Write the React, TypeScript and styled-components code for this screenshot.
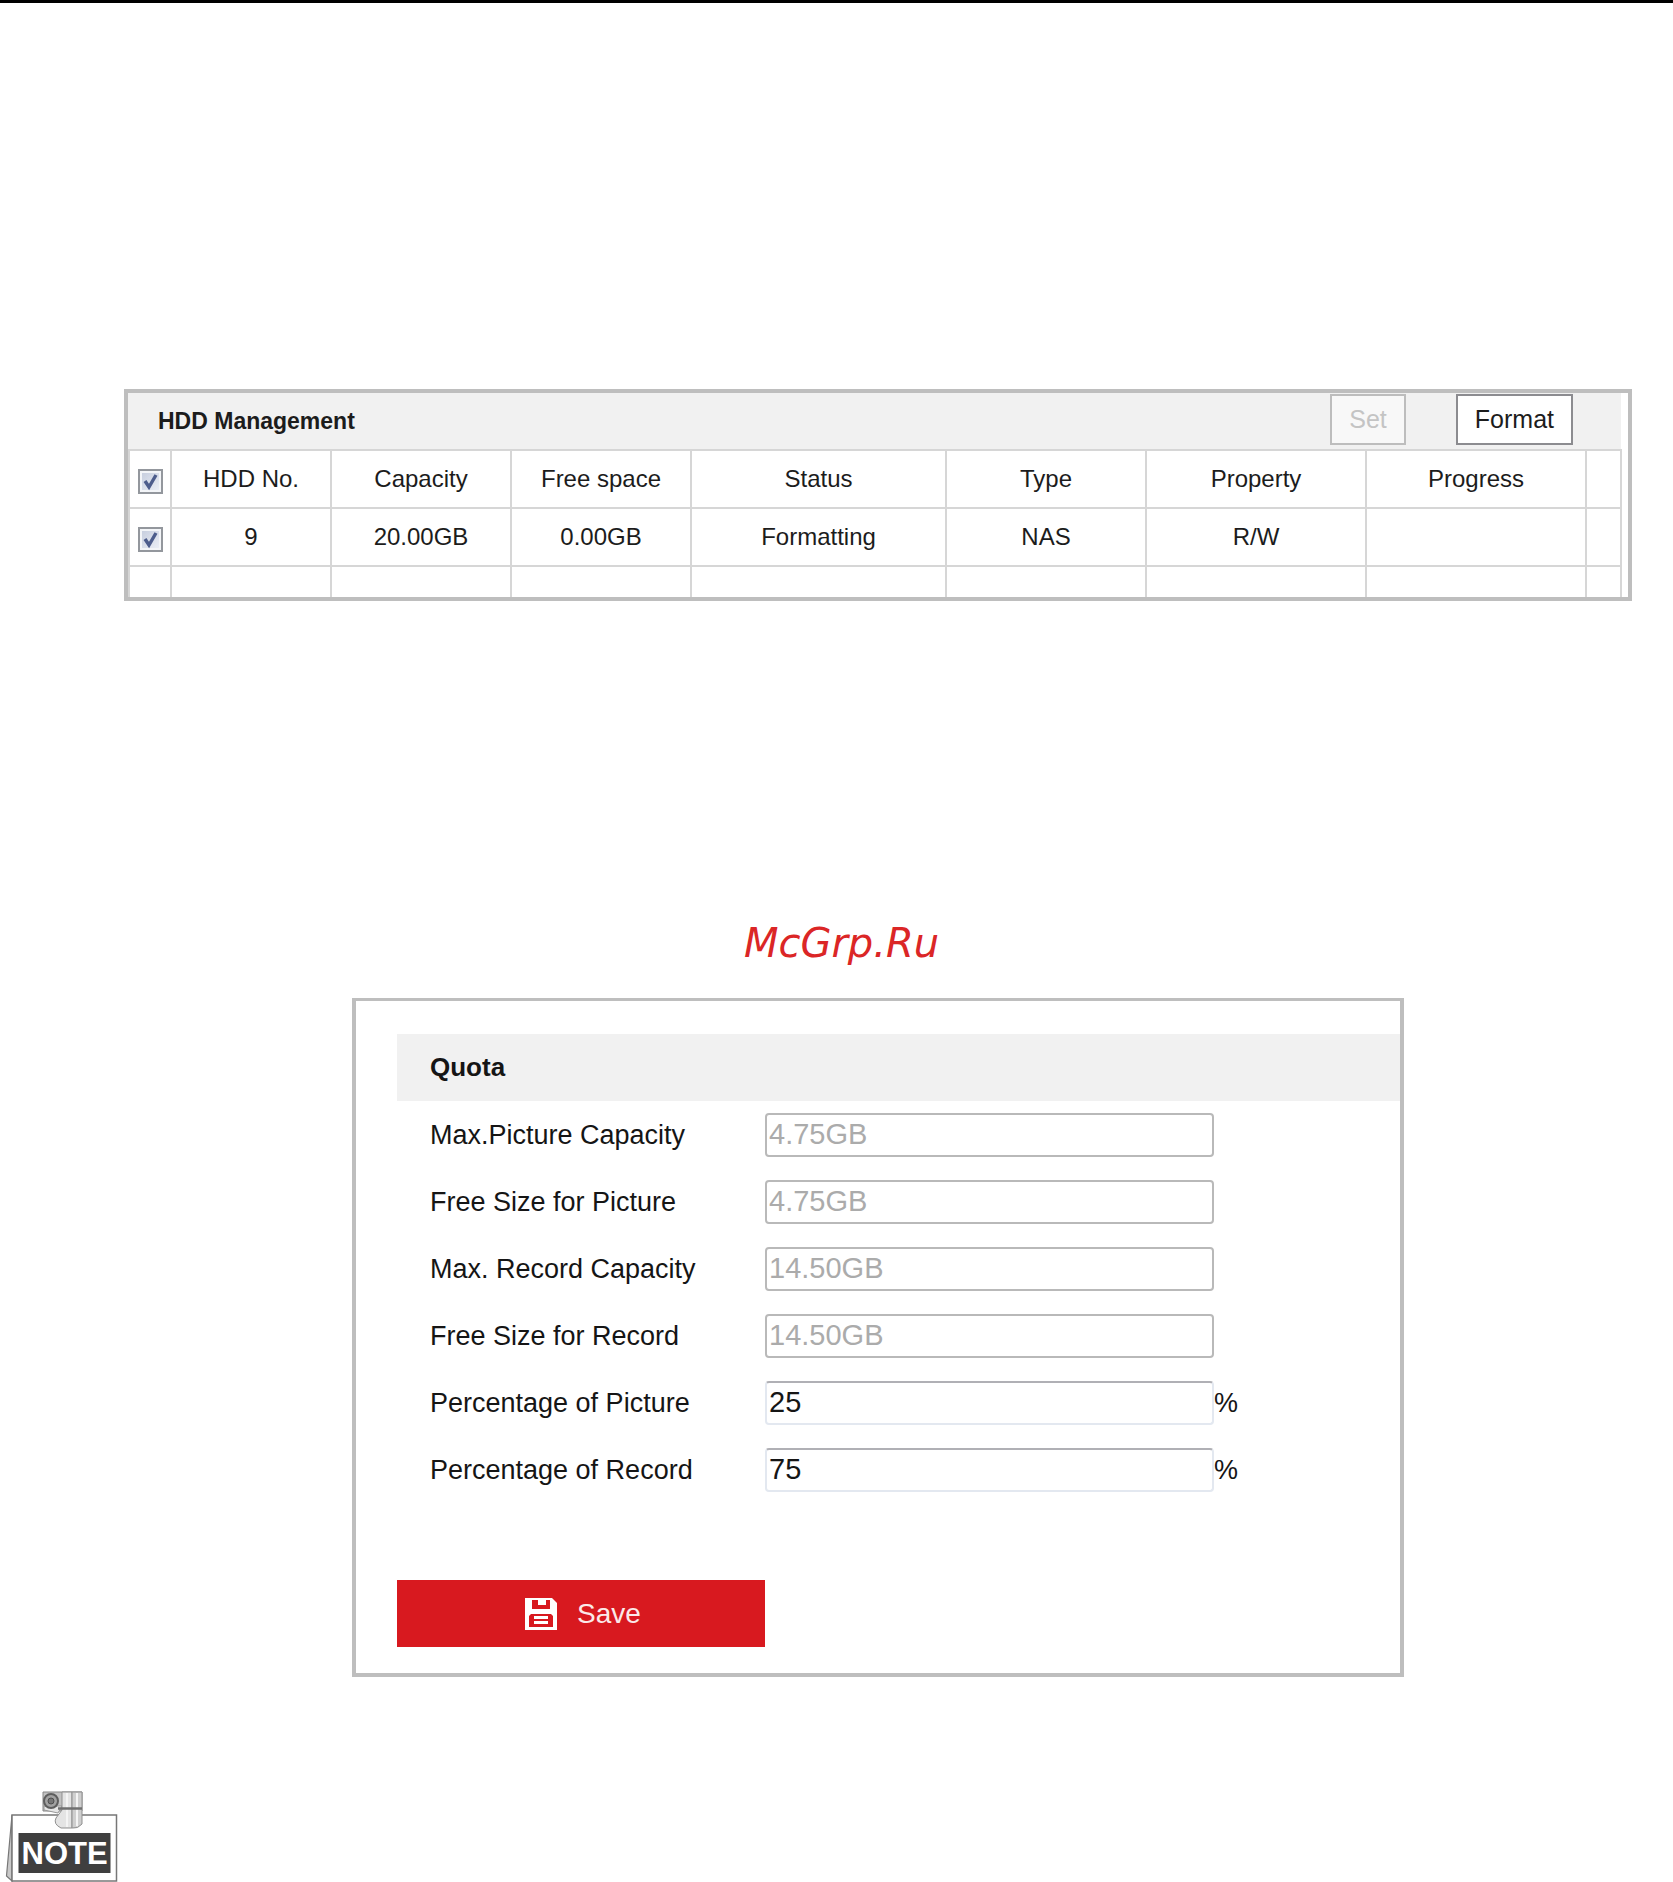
import React, { useState } from "react";
import styled, { createGlobalStyle, css } from "styled-components";

const GlobalStyle = createGlobalStyle`
  *, *::before, *::after { box-sizing: border-box; }
  body {
    margin: 0;
    background: #fff;
    color: #1c1c1c;
    font-family: "Liberation Sans", Arial, sans-serif;
  }
  button, input { font-family: inherit; }
`;

const Page = styled.div`
  border-top: 3px solid #000;
`;

const Section = styled.section<{ $top: number }>`
  padding: ${(p) => p.$top}px 41px 0 124px;
`;

const HddPanel = styled.div`
  border: 4px solid #bebebe;
  padding: 0 7px 0 0;
`;

const HddHeader = styled.header`
  display: flex;
  align-items: flex-start;
  gap: 50px;
  height: 56px;
  padding: 1px 48px 0 30px;
  background: #f1f1f1;
`;

const HddTitle = styled.h2`
  flex: 1;
  margin: 0;
  font-size: 23px;
  line-height: 55px;
  font-weight: 700;
`;

const ToolButton = styled.button`
  height: 51px;
  padding: 0 17px;
  border: 2px solid #8c8c90;
  background: #fff;
  color: #1c1c1c;
  font-size: 25px;
  line-height: 47px;

  &:disabled {
    border-color: #bdbdbd;
    background: #f8f8f8;
    color: #c4c4c4;
  }
`;

const HddTable = styled.table`
  width: 100%;
  table-layout: fixed;
  border-spacing: 0;
  border-right: 2px solid #d6d6d6;
  font-size: 24px;
  line-height: 28px;
`;

const cell = css`
  height: 58px;
  padding: 0;
  border-top: 2px solid #d6d6d6;
  border-left: 2px solid #d6d6d6;
  text-align: center;
  font-weight: 400;
`;

const HeadCell = styled.th`
  ${cell}
`;

const Cell = styled.td<{ $short?: boolean }>`
  ${cell}
  ${(p) => p.$short && "height: 32px;"}
`;

const CheckBox = styled.label`
  display: inline-grid;
  vertical-align: middle;
  padding-top: 4px;

  input, svg { grid-area: 1 / 1; }
  svg { pointer-events: none; }
  input:not(:checked) + svg { visibility: hidden; }
`;

const CheckInput = styled.input`
  appearance: none;
  width: 25px;
  height: 25px;
  margin: 0;
  border: 2px solid #93979d;
  background: linear-gradient(135deg, #c3cbdc, #eef1f8);
  box-shadow: inset 0 0 0 2px #f3f5f8;
`;

const Watermark = styled.p`
  margin: 0;
  padding: 318px 0 0 10px;
  color: #db2626;
  font-family: "DejaVu Sans", Verdana, sans-serif;
  font-size: 40px;
  line-height: 48px;
  font-style: italic;
  text-align: center;
`;

const QuotaPanel = styled.form`
  max-width: 1052px;
  margin: 0 auto;
  padding: 33px 0 26px 41px;
  border: 4px solid #bebebe;
  border-top-width: 3px;
  color: #151515;
`;

const QuotaTitle = styled.h2`
  margin: 0;
  padding-left: 33px;
  background: #f1f1f1;
  font-size: 26px;
  line-height: 67px;
`;

const Field = styled.div`
  display: grid;
  grid-template-columns: 335px 449px auto;
  align-items: center;
  height: 67px;
  padding-left: 33px;
  font-size: 27px;
  line-height: 32px;
`;

const TextBox = styled.input`
  width: 100%;
  height: 44px;
  padding: 0 2px;
  border: 2px solid #e3e8f0;
  border-top-color: #b0b0b5;
  border-radius: 4px;
  background: #fff;
  color: #151515;
  font-size: 29px;

  &:disabled {
    border-color: #b9b9b9;
    color: #ababab;
  }
`;

const SaveButton = styled.button`
  display: flex;
  align-items: center;
  justify-content: center;
  gap: 20px;
  width: 368px;
  height: 67px;
  margin-top: 77px;
  padding: 0 0 0 4px;
  border: 0;
  background: #d8191f;
  color: #fbe9e9;
  font-size: 28px;
`;

const NoteFigure = styled.figure`
  margin: 0;
  padding: 113px 0 0 5px;

  svg { display: block; }
  text {
    font-family: "Liberation Sans", Arial, sans-serif;
    font-size: 31px;
    font-weight: 700;
  }
`;

const columns = [
  { name: "HDD No.", width: 160 },
  { name: "Capacity", width: 180 },
  { name: "Free space", width: 180 },
  { name: "Status", width: 255 },
  { name: "Type", width: 200 },
  { name: "Property", width: 220 },
  { name: "Progress", width: 220 },
  { name: "", width: 35 },
];

const disk = ["9", "20.00GB", "0.00GB", "Formatting", "NAS", "R/W", "", ""];

const quota = [
  { id: "max-picture", label: "Max.Picture Capacity", value: "4.75GB" },
  { id: "free-picture", label: "Free Size for Picture", value: "4.75GB" },
  { id: "max-record", label: "Max. Record Capacity", value: "14.50GB" },
  { id: "free-record", label: "Free Size for Record", value: "14.50GB" },
  { id: "pct-picture", label: "Percentage of Picture", value: "25", unit: "%" },
  { id: "pct-record", label: "Percentage of Record", value: "75", unit: "%" },
];

function Check({ label }: { label: string }) {
  const [on, setOn] = useState(true);
  return (
    <CheckBox>
      <CheckInput
        type="checkbox"
        aria-label={label}
        checked={on}
        onChange={(e) => setOn(e.target.checked)}
      />
      <svg width="25" height="25" viewBox="0 0 25 25" aria-hidden="true">
        <path d="M7 12 L11 18 L18 6" fill="none" stroke="#4d5d8c" strokeWidth="3.4" />
      </svg>
    </CheckBox>
  );
}

function DiskIcon() {
  return (
    <svg width="32" height="32" viewBox="0 0 32 32" aria-hidden="true">
      <path d="M0 0H27L32 5V32H0Z" fill="#fff" />
      <path d="M7 2H13V7H21V2H25V11H7Z" fill="#d8191f" />
      <path d="M6 16H26L28 18V29H4V18Z" fill="#d8191f" />
      <path d="M9 18H23V21H9ZM9 23H23V26H9Z" fill="#fff" />
    </svg>
  );
}

function NoteIcon() {
  return (
    <svg width="113" height="92" viewBox="0 0 113 92" role="img" aria-label="Note">
      <path d="M7 25 L1.5 86 L7 91Z" fill="#c9c9c9" stroke="#777" strokeWidth="1.2" />
      <rect x="7" y="25" width="104.5" height="66" fill="#fff" stroke="#777" strokeWidth="1.5" />
      <rect x="13.5" y="43" width="92" height="40" fill="#3f3f3f" />
      <text x="16.5" y="74" fill="#fff">NOTE</text>
      <path d="M38 2H77V21H38Z" fill="#c2c2c2" stroke="#858585" />
      <path d="M39 20 L53 23 L57 16 H39Z" fill="#e6e6e6" stroke="#999" />
      <path d="M57 2H67V38H56Q48 34 51 28L57 20Z" fill="#e4e4e4" stroke="#8f8f8f" />
      <path d="M67 2H77V34Q73 39 67 38Z" fill="#cfcfcf" stroke="#8f8f8f" />
      <path d="M62 3V37M72 3V36" stroke="#f4f4f4" strokeWidth="2" />
      <circle cx="46" cy="11" r="7" fill="#a2a2a2" stroke="#5e5e5e" strokeWidth="2" />
      <circle cx="46" cy="11" r="3" fill="#777" stroke="#4e4e4e" />
      <path d="M53 18.5H77" stroke="#707070" strokeWidth="2.5" />
    </svg>
  );
}

export default function App() {
  const [values, setValues] = useState(() => quota.map((q) => q.value));

  return (
    <Page>
      <GlobalStyle />
      <Section $top={386}>
        <HddPanel>
          <HddHeader>
            <HddTitle>HDD Management</HddTitle>
            <ToolButton type="button" disabled>Set</ToolButton>
            <ToolButton type="button">Format</ToolButton>
          </HddHeader>
          <HddTable aria-label="HDD Management">
            <colgroup>
              <col style={{ width: 42 }} />
              {columns.map((c, i) => (
                <col key={i} style={{ width: c.width }} />
              ))}
            </colgroup>
            <thead>
              <tr>
                <HeadCell><Check label="Select all" /></HeadCell>
                {columns.map((c, i) => <HeadCell key={i}>{c.name}</HeadCell>)}
              </tr>
            </thead>
            <tbody>
              <tr>
                <Cell><Check label="Select HDD 9" /></Cell>
                {disk.map((v, i) => <Cell key={i}>{v}</Cell>)}
              </tr>
              <tr>
                <Cell $short />
                {disk.map((_, i) => <Cell $short key={i} />)}
              </tr>
            </tbody>
          </HddTable>
        </HddPanel>
      </Section>

      <Watermark>McGrp.Ru</Watermark>

      <Section $top={31}>
        <QuotaPanel onSubmit={(e) => e.preventDefault()}>
          <QuotaTitle>Quota</QuotaTitle>
          {quota.map((q, i) => (
            <Field key={q.id}>
              <label htmlFor={q.id}>{q.label}</label>
              <TextBox
                id={q.id}
                type="text"
                disabled={!q.unit}
                value={values[i]}
                onChange={(e) =>
                  setValues(values.map((v, n) => (n === i ? e.target.value : v)))
                }
              />
              {q.unit && <span>{q.unit}</span>}
            </Field>
          ))}
          <SaveButton type="submit">
            <DiskIcon />
            Save
          </SaveButton>
        </QuotaPanel>
      </Section>

      <NoteFigure>
        <NoteIcon />
      </NoteFigure>
    </Page>
  );
}
